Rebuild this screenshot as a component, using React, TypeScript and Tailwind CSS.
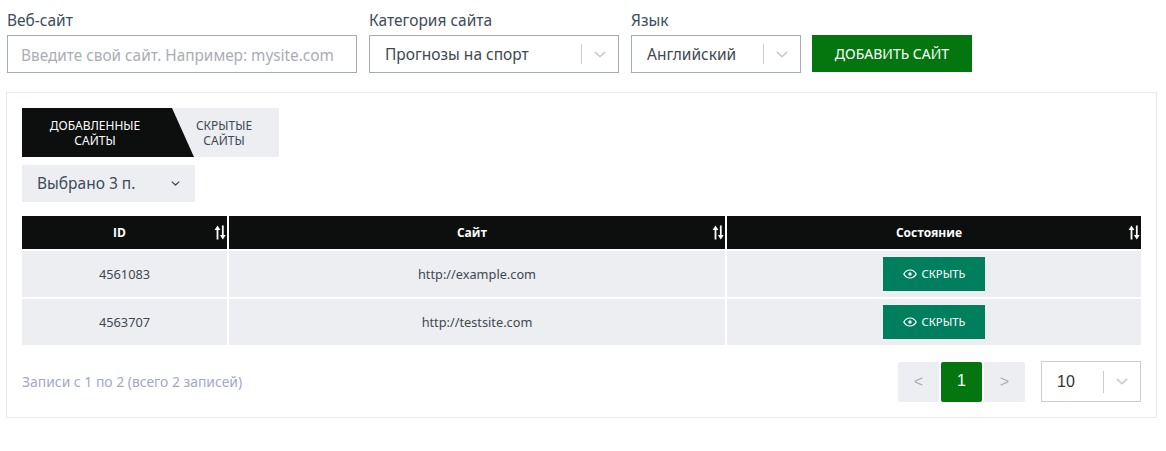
import React from "react";

const Chevron = ({ className = "" }: { className?: string }) => (
  <svg className={className} width="12" height="7" viewBox="0 0 14 8" fill="none" stroke="currentColor" strokeWidth="2">
    <path d="M1 1l6 5.5L13 1" />
  </svg>
);

const Sort = () => (
  <svg width="12" height="15" viewBox="0 0 12 15" fill="#fff" className="shrink-0">
    <path d="M2.6 14.5V4.5h1.8v10z" />
    <path d="M0.6 5L3.5 0.4 6.4 5z" />
    <path d="M7.9 0.5v10h1.8v-10z" />
    <path d="M5.9 10L8.8 14.6 11.7 10z" />
  </svg>
);

const Eye = () => (
  <svg width="14" height="10" viewBox="0 0 14 10" fill="none" stroke="#fff" strokeWidth="1.2">
    <path d="M0.8 5C2.2 2.4 4.4 1 7 1s4.8 1.4 6.2 4C11.8 7.6 9.6 9 7 9S2.2 7.6 0.8 5z" />
    <circle cx="7" cy="5" r="1.7" fill="#fff" stroke="none" />
  </svg>
);

const Field = ({ label, width, children }: { label: string; width: string; children: React.ReactNode }) => (
  <div className={`flex flex-col ${width}`}>
    <label className="h-[28px] pt-[2px] text-[15.5px] leading-[22px] text-[#3e4b5b]">{label}</label>
    {children}
  </div>
);

const Select = ({ value }: { value: string }) => (
  <div className="flex h-[38px] items-center border border-[#a5acb3] bg-white pl-[15px] text-[15.5px] text-[#3e4850]">
    <span className="flex-1 truncate pt-px">{value}</span>
    <span className="h-[20px] w-px bg-[#cccccc]" />
    <span className="flex w-[36px] justify-center text-[#cccccc]"><Chevron /></span>
  </div>
);

const Hide = () => (
  <button className="flex h-[34px] w-[102px] items-center justify-center gap-[5px] bg-[#007f5f] text-[11.3px] text-white">
    <Eye />
    <span>СКРЫТЬ</span>
  </button>
);

const Head = ({ title }: { title: string }) => (
  <div className="relative flex h-[33px] items-center justify-center bg-[#0d0f0e] pr-[10px] text-[12px] font-bold text-white" style={{ fontFamily: "'Open Sans', sans-serif" }}>
    {title}
    <span className="absolute right-[1.5px] top-[9px]"><Sort /></span>
  </div>
);

const Cell = ({ children }: { children: React.ReactNode }) => (
  <div className="flex h-[46px] items-center justify-center bg-[#edeef2] text-[12.75px] text-[#3e4850]">{children}</div>
);

export default function App() {
  return (
    <div className="min-h-[451px] bg-white px-[6px] pt-[7px]" style={{ fontFamily: "'Noto Sans', sans-serif" }}>
      <div className="flex items-end pl-[1px]">
        <Field label="Веб-сайт" width="w-[350px]">
          <input
            readOnly
            placeholder="Введите свой сайт. Например: mysite.com"
            className="h-[38px] w-full border border-[#a5acb3] bg-white px-[13px] pt-px text-[15.35px] placeholder:text-[#a9aeb4] outline-none"
          />
        </Field>
        <div className="ml-[12px]">
          <Field label="Категория сайта" width="w-[250px]"><Select value="Прогнозы на спорт" /></Field>
        </div>
        <div className="ml-[12px]">
          <Field label="Язык" width="w-[170px]"><Select value="Английский" /></Field>
        </div>
        <button className="ml-[11px] mb-px h-[37px] w-[160px] bg-[#04760f] text-[14px] text-white">ДОБАВИТЬ САЙТ</button>
      </div>

      <div className="mt-[19px] h-[326px] w-[1151px] border border-[#e8e8e8] px-[15px] pt-[15px]">
        <div className="flex h-[49px] w-[257px] bg-[#edeef2] text-[12px] leading-[15px]">
          <div className="flex w-[172px] shrink-0 items-center bg-[#0d0f0e] text-center text-white [clip-path:polygon(0_0,150px_0,100%_100%,0_100%)]">
            <span className="ml-[8px] w-[130px]">ДОБАВЛЕННЫЕ САЙТЫ</span>
          </div>
          <div className="flex flex-1 items-center text-center text-[#3e4850]">
            <span className="ml-[-5px] w-[70px]">СКРЫТЫЕ САЙТЫ</span>
          </div>
        </div>
        <div className="mt-[8px] flex h-[37px] w-[173px] items-center justify-between bg-[#edeef2] pl-[15px] pr-[15px] text-[15.5px] text-[#3e4b5b]">
          <span>Выбрано 3 п.</span>
          <Chevron className="h-[5px] w-[9px] text-[#3e4b5b]" />
        </div>

        <div className="mt-[14px] grid w-[1119px] grid-cols-[205px_496px_414px] gap-[2px]">
          <Head title="ID" />
          <Head title="Сайт" />
          <Head title="Состояние" />
          <Cell><span className="pt-px">4561083</span></Cell>
          <Cell><span className="pt-px">http://example.com</span></Cell>
          <Cell><Hide /></Cell>
          <Cell><span className="pt-px">4563707</span></Cell>
          <Cell><span className="pt-px">http://testsite.com</span></Cell>
          <Cell><Hide /></Cell>
        </div>

        <div className="mt-[16px] flex w-[1119px] items-center">
          <span className="flex-1 pt-px text-[13.9px] text-[#a3a9c2]">Записи с 1 по 2 (всего 2 записей)</span>
          <div className="flex h-[40px] gap-[2px] text-[16px]" style={{ fontFamily: "'Liberation Sans', sans-serif" }}>
            <span className="flex w-[41px] items-center justify-center rounded-[2px] bg-[#edeef2] text-[#a9aeb4]">&lt;</span>
            <span className="flex w-[41px] items-center justify-center rounded-[2px] bg-[#04760f] pb-[2px] text-white">1</span>
            <span className="flex w-[41px] items-center justify-center rounded-[2px] bg-[#edeef2] text-[#a9aeb4]">&gt;</span>
          </div>
          <div className="ml-[16px] flex h-[41px] w-[100px] items-center border border-[#cccccc] pl-[15px] text-[16px] text-[#333333]" style={{ fontFamily: "'Liberation Sans', sans-serif" }}>
            <span className="flex-1">10</span>
            <span className="h-[22px] w-px bg-[#cccccc]" />
            <span className="flex w-[36px] justify-center text-[#cccccc]"><Chevron /></span>
          </div>
        </div>
      </div>
    </div>
  );
}
